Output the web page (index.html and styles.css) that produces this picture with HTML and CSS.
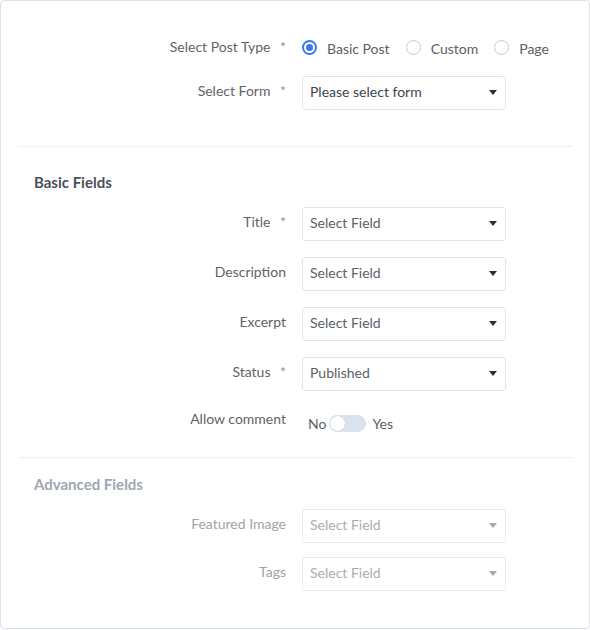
FILE: index.html
```html
<!DOCTYPE html>
<html>
<head>
<meta charset="utf-8">
<link rel="stylesheet" href="styles.css">
</head>
<body>
<div class="card">
  <div class="top">
    <div class="row radio-row">
      <div class="label">Select Post Type <span class="req">*</span></div>
      <div class="radios">
        <label class="radio checked"><span class="dot"></span>Basic Post</label>
        <label class="radio"><span class="dot"></span>Custom</label>
        <label class="radio"><span class="dot"></span>Page</label>
      </div>
    </div>
    <div class="row">
      <div class="label">Select Form <span class="req">*</span></div>
      <div class="select dark"><span>Please select form</span><i class="caret"></i></div>
    </div>
  </div>
  <hr class="divider">
  <div class="section basic">
    <h3 class="sec-title">Basic Fields</h3>
    <div class="rows">
      <div class="row">
        <div class="label">Title <span class="req">*</span></div>
        <div class="select"><span>Select Field</span><i class="caret"></i></div>
      </div>
      <div class="row">
        <div class="label">Description</div>
        <div class="select"><span>Select Field</span><i class="caret"></i></div>
      </div>
      <div class="row">
        <div class="label">Excerpt</div>
        <div class="select"><span>Select Field</span><i class="caret"></i></div>
      </div>
      <div class="row">
        <div class="label">Status <span class="req">*</span></div>
        <div class="select"><span>Published</span><i class="caret"></i></div>
      </div>
      <div class="row toggle-row">
        <div class="label">Allow comment</div>
        <div class="toggle"><span>No</span><span class="switch"><span class="knob"></span></span><span>Yes</span></div>
      </div>
    </div>
  </div>
  <hr class="divider">
  <div class="section advanced">
    <h3 class="sec-title">Advanced Fields</h3>
    <div class="rows">
      <div class="row">
        <div class="label">Featured Image</div>
        <div class="select"><span>Select Field</span><i class="caret"></i></div>
      </div>
      <div class="row">
        <div class="label">Tags</div>
        <div class="select"><span>Select Field</span><i class="caret"></i></div>
      </div>
    </div>
  </div>
</div>
</body>
</html>
```

FILE: styles.css
```css
* { box-sizing: border-box; }
html, body { margin: 0; padding: 0; background: #fff; }
body { font-family: Lato, "Liberation Sans", sans-serif; font-size: 14px; color: #606266; }

.card {
  width: 590px;
  height: 629px;
  border: 1px solid #dde2e8;
  border-radius: 4px;
  padding: 29px 17px 0;
}

.row { display: flex; align-items: center; height: 34px; }
.label {
  width: 269px;
  text-align: right;
  color: #5f6368;
  padding-right: 1px;
  white-space: nowrap;
  align-self: flex-start;
  line-height: 30px;
}
.radio-row .label { align-self: center; line-height: 20px; padding-bottom: 1px; }
.req { color: #8f949c; margin-left: 6px; font-size: 14px; }

.top .row + .row { margin-top: 12px; }

.radios { display: flex; align-items: center; margin-left: 15px; white-space: nowrap; }
.radio { display: flex; align-items: center; color: #5a5e66; margin-right: 16px; padding-top: 2px; }
.radio .dot {
  flex: none;
  width: 15px; height: 15px;
  border: 1.5px solid #c4c8d0;
  border-radius: 50%;
  margin-right: 10px;
  margin-top: -2px;
  position: relative;
}
.radio.checked .dot { border: 2px solid #3a78f2; }
.radio.checked .dot::after {
  content: "";
  position: absolute;
  left: 50%; top: 50%;
  width: 7px; height: 7px;
  margin: -3.5px 0 0 -3.5px;
  border-radius: 50%;
  background: #3a78f2;
}

.select {
  margin-left: 15px;
  width: 204px;
  height: 34px;
  border: 1px solid #dfe6f0;
  border-radius: 3px;
  display: flex;
  align-items: center;
  justify-content: space-between;
  padding: 0 7px 3px 7px;
  color: #5b5f67;
}
.select.dark { color: #3f4349; }
.caret {
  width: 0; height: 0;
  border-left: 4.5px solid transparent;
  border-right: 4.5px solid transparent;
  border-top: 5px solid #2b2e33;
  margin-right: 1px;
  margin-top: 2px;
}

.divider {
  border: 0;
  border-top: 1px solid #eceef2;
  margin: 36px 0 0;
  height: 0;
}

.sec-title {
  margin: 0 0 15px 16px;
  font-size: 15px;
  line-height: 20px;
  font-weight: 700;
  color: #4b505c;
}
.basic { padding-top: 25px; }
.basic .rows { display: flex; flex-direction: column; gap: 16px; }
.toggle-row .label { line-height: 24px; }
.basic + .divider { margin-top: 16px; }

.toggle { margin-left: 21px; display: flex; align-items: center; color: #5b5f67; margin-top: -2px; }
.switch {
  width: 37px; height: 17px;
  border-radius: 9px;
  background: #dce1ee;
  margin: 0 6px 0 3px;
  position: relative;
}
.knob {
  position: absolute;
  left: 1px; top: 1px;
  width: 15px; height: 15px;
  border-radius: 50%;
  background: #fff;
  box-shadow: 0 0 1px rgba(0,0,0,0.25);
}

.advanced { padding-top: 16px; }
.advanced .sec-title { color: #a0a6b2; margin-bottom: 15px; }
.advanced .rows { display: flex; flex-direction: column; gap: 14px; }
.advanced .label { color: #a0a3aa; }
.advanced .select { color: #a9adb4; border-color: #e8edf4; }
.advanced .caret { border-top-color: #a5a9b0; }
```
